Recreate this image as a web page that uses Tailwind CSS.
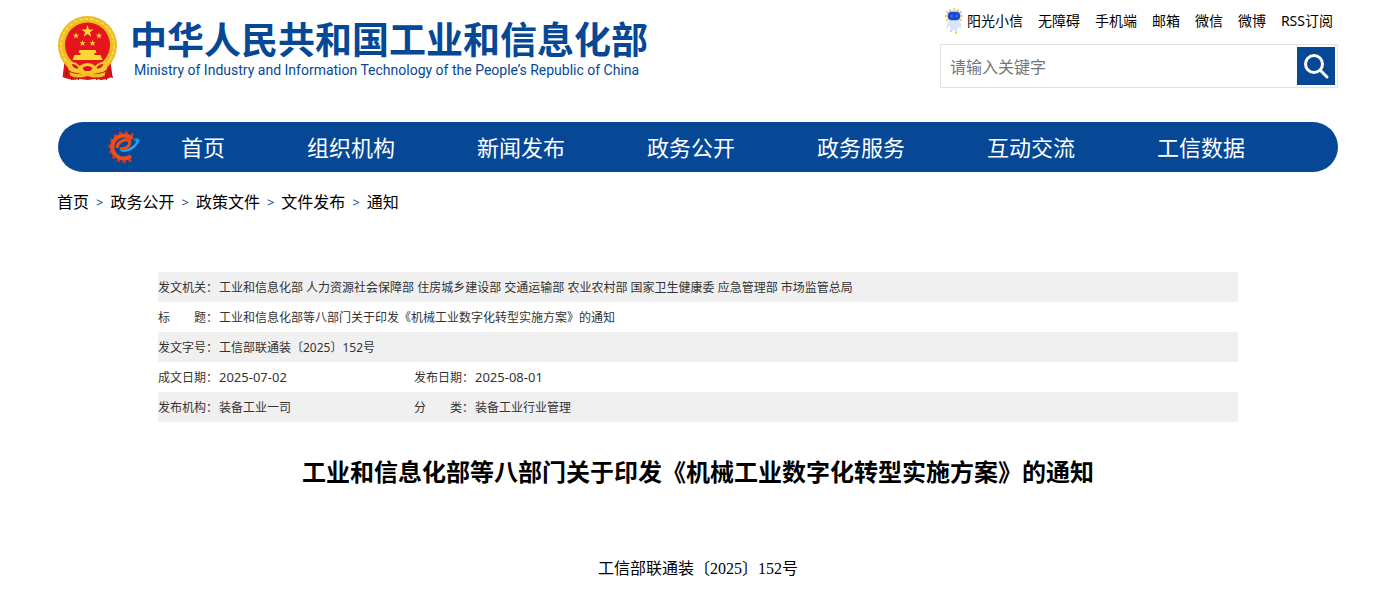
<!DOCTYPE html>
<html lang="zh-CN">
<head>
<meta charset="utf-8">
<meta name="viewport" content="width=device-width, initial-scale=1">
<title>工业和信息化部等八部门关于印发《机械工业数字化转型实施方案》的通知</title>
<script src="https://cdn.jsdelivr.net/npm/@tailwindcss/browser@4"></script>
</head>
<body class="bg-white pb-3 pl-[57px] pr-11 font-['Noto_Sans','Noto_Sans_CJK_SC',sans-serif] text-black">
<header class="flex items-start justify-between pt-2">
  <a href="#" class="flex gap-3 pt-2 text-[#064896]">
    <svg class="h-[66px] w-[61px] shrink-0" viewBox="0 0 60 66" role="img" aria-label="国徽">
      <path d="M7 46 5 61l6 2 5 1 6-1 8 1 8-1 6 1 5-1 6-2-2-15z" fill="#d9141c"/>
      <path d="m10 53-2 9m7-8-1 10m34-10 1 10m3-11 3 9M22 56l-1 8m17-8 1 8" stroke="#a80d16" fill="none"/>
      <circle cx="30" cy="29.500" r="29.500" fill="#efba22"/>
      <circle cx="30" cy="29.500" r="26.500" fill="none" stroke="#f9d745" stroke-width="2" stroke-dasharray="4 1.500"/>
      <circle cx="30" cy="29" r="22.500" fill="#e4151d"/>
      <g fill="#fbd934">
        <path d="m30 9 1.500 4.400h4.600l-3.700 2.800 1.400 4.500-3.800-2.700-3.800 2.700 1.400-4.500-3.700-2.800h4.600z"/>
        <path id="s" d="m18.500 16.500.8 2.200h2.300l-1.800 1.400.7 2.300-2-1.400-2 1.400.7-2.300-1.800-1.400h2.300z"/>
        <use href="#s" x="23"/><use href="#s" x="6.500" y="7.500"/><use href="#s" x="16.500" y="7.500"/>
        <path d="M22 34h16l1 3h-2v2h6l2 5H15l2-5h6v-2h-2z"/>
      </g>
      <path d="M9 46q9-1 13 4 8-6 16 0 4-5 13-4l-2 8q-7 5-12 1l-3 4h-8l-3-4q-5 4-12-1z" fill="#f5c82c"/>
      <path d="M14 48q5 0 7 4-4 2-7-4zm32 0q-5 0-7 4 4 2 7-4zM25 52q5-4 10 0l-2 3h-6z" fill="#d9141c"/>
      <path d="M12 56q10 4 18 1 8 3 18-1l-1 4q-9 3-17 0-8 3-17 0z" fill="#f2bd22"/>
    </svg>
    <span class="block">
      <span class="block pt-1 text-[37px] font-bold leading-10 whitespace-nowrap">中华人民共和国工业和信息化部</span>
      <span class="block pt-0.5 pl-1 font-[Roboto,sans-serif] text-sm leading-4 whitespace-nowrap">Ministry of Industry and Information Technology of the People’s Republic of China</span>
    </span>
  </a>
  <div class="w-[398px]">
    <nav aria-label="快捷链接" class="flex h-[26px] items-center justify-end gap-[15px] pr-[5px] text-sm whitespace-nowrap">
      <a href="#" class="flex items-center gap-1">
        <svg class="h-[26px] w-[18px]" viewBox="0 0 18 26" aria-hidden="true">
          <g fill="#fbc21e"><circle cx="9" cy="1" r="1"/><circle cx="5" cy="2" r="1"/><circle cx="13" cy="2" r="1"/><circle cx="2" cy="4" r="1"/><circle cx="16" cy="4" r="1"/><circle cx="1" cy="8" r="1"/><circle cx="17" cy="8" r="1"/><circle cx="2" cy="12" r="1"/><circle cx="16" cy="12" r="1"/><circle cx="6" cy="23" r="1"/><circle cx="11" cy="25" r="1"/></g>
          <path d="M4 12h10l2 4v4l-1 1-2-4-1 7h-2l-1-4-1 3H5V17l-3 4-1-1z" fill="#d9e4f8"/>
          <rect x="2" y="2.500" width="14" height="10.500" rx="5" fill="#a9bff0"/>
          <rect x="3" y="4" width="12" height="8" rx="3.500" fill="#1f48c8"/>
          <path d="M6 8h1.500M11 8h1.500" stroke="#4fa4ff" stroke-width="1.500"/>
        </svg>阳光小信</a>
      <a href="#">无障碍</a><a href="#">手机端</a><a href="#">邮箱</a><a href="#">微信</a><a href="#">微博</a><a href="#">RSS订阅</a>
    </nav>
    <form class="mt-[10px] flex h-11 items-start border border-[#e2e2e2] p-0.5">
      <input type="text" aria-label="请输入关键字" placeholder="请输入关键字" class="h-10 min-w-0 flex-1 px-[7px] text-base outline-none placeholder:text-[#757575]">
      <button type="button" aria-label="搜索" class="flex size-[38px] items-center justify-center bg-[#064896]">
        <svg class="size-7" viewBox="0 0 28 28" fill="none" stroke="#fff" stroke-width="3" stroke-linecap="round" aria-hidden="true"><circle cx="12" cy="12" r="8.500"/><path d="m18.500 18.500 6.500 6.500"/></svg>
      </button>
    </form>
  </div>
</header>

<nav aria-label="主导航" class="mt-[34px] ml-px flex h-[50px] items-center rounded-full bg-[#064896] pl-12 text-[22px] whitespace-nowrap text-white">
  <svg class="h-8 w-[34px] shrink-0" viewBox="0 0 34 32" fill="none" aria-hidden="true">
    <path d="M27 5.200A14 14 0 1 0 26 28" stroke="#e02f14" stroke-width="4" stroke-dasharray="3 2.700"/>
    <path d="M26 8A11.500 11.500 0 1 0 25 25" stroke="#f04c16" stroke-width="4"/>
    <path d="M11 17C11 12 17 8 22 9c3 1 2 6-2 8-3 1-5 1-6 0" stroke="#f04c16" stroke-width="3"/>
    <path d="M26 8c7-2 10 0 6 5-3 5-9 8-14 8-3 0-4-1-4-3 3 2 8 1 12-2 4-2 6-6 0-8z" fill="#1c86cf"/>
    <path d="M30 8c5 1 1 6-4 10-5 3-10 4-12 1 3 1 7 0 11-3 4-2 7-6 5-8z" fill="#35a5e2"/>
  </svg>
  <a href="#" class="px-[41px]">首页</a><a href="#" class="px-[41px]">组织机构</a><a href="#" class="px-[41px]">新闻发布</a><a href="#" class="px-[41px]">政务公开</a><a href="#" class="px-[41px]">政务服务</a><a href="#" class="px-[41px]">互动交流</a><a href="#" class="px-[41px]">工信数据</a>
</nav>

<nav aria-label="面包屑" class="mt-[18px] flex items-center gap-[7px] text-base leading-6">
  <a href="#">首页</a><span class="text-[13px] text-[#064896]">&gt;</span><a href="#">政务公开</a><span class="text-[13px] text-[#064896]">&gt;</span><a href="#">政策文件</a><span class="text-[13px] text-[#064896]">&gt;</span><a href="#">文件发布</a><span class="text-[13px] text-[#064896]">&gt;</span><a href="#">通知</a>
</nav>

<main class="mt-[58px] pr-[100px] pl-[101px]">
  <table class="w-full table-fixed text-left text-xs text-[#333]">
    <colgroup><col class="w-[61px]"><col class="w-[195px]"><col class="w-[61px]"><col></colgroup>
    <tbody>
      <tr class="h-[30px] bg-[#f0f0f0]"><th scope="row" class="pt-0.5 font-normal whitespace-nowrap">发文机关：</th><td colspan="3" class="pt-0.5">工业和信息化部 人力资源社会保障部 住房城乡建设部 交通运输部 农业农村部 国家卫生健康委 应急管理部 市场监管总局</td></tr>
      <tr class="h-[30px]"><th scope="row" class="pt-0.5 font-normal whitespace-nowrap">标　　题：</th><td colspan="3" class="pt-0.5">工业和信息化部等八部门关于印发《机械工业数字化转型实施方案》的通知</td></tr>
      <tr class="h-[30px] bg-[#f0f0f0]"><th scope="row" class="pt-0.5 font-normal whitespace-nowrap">发文字号：</th><td colspan="3" class="pt-0.5">工信部联通装〔2025〕152号</td></tr>
      <tr class="h-[30px]"><th scope="row" class="pt-0.5 font-normal whitespace-nowrap">成文日期：</th><td class="text-[13px] leading-4">2025-07-02</td><th scope="row" class="pt-0.5 font-normal whitespace-nowrap">发布日期：</th><td class="text-[13px] leading-4">2025-08-01</td></tr>
      <tr class="h-[30px] bg-[#f0f0f0]"><th scope="row" class="pt-0.5 font-normal whitespace-nowrap">发布机构：</th><td class="pt-0.5">装备工业一司</td><th scope="row" class="pt-0.5 font-normal whitespace-nowrap">分　　类：</th><td class="pt-0.5">装备工业行业管理</td></tr>
    </tbody>
  </table>
  <h1 class="mt-8 text-center text-2xl leading-9 font-bold">工业和信息化部等八部门关于印发《机械工业数字化转型实施方案》的通知</h1>
  <p class="mt-[67px] text-center font-['Liberation_Serif','Noto_Sans_CJK_SC',serif] text-base leading-6">工信部联通装〔2025〕152号</p>
</main>
</body>
</html>
